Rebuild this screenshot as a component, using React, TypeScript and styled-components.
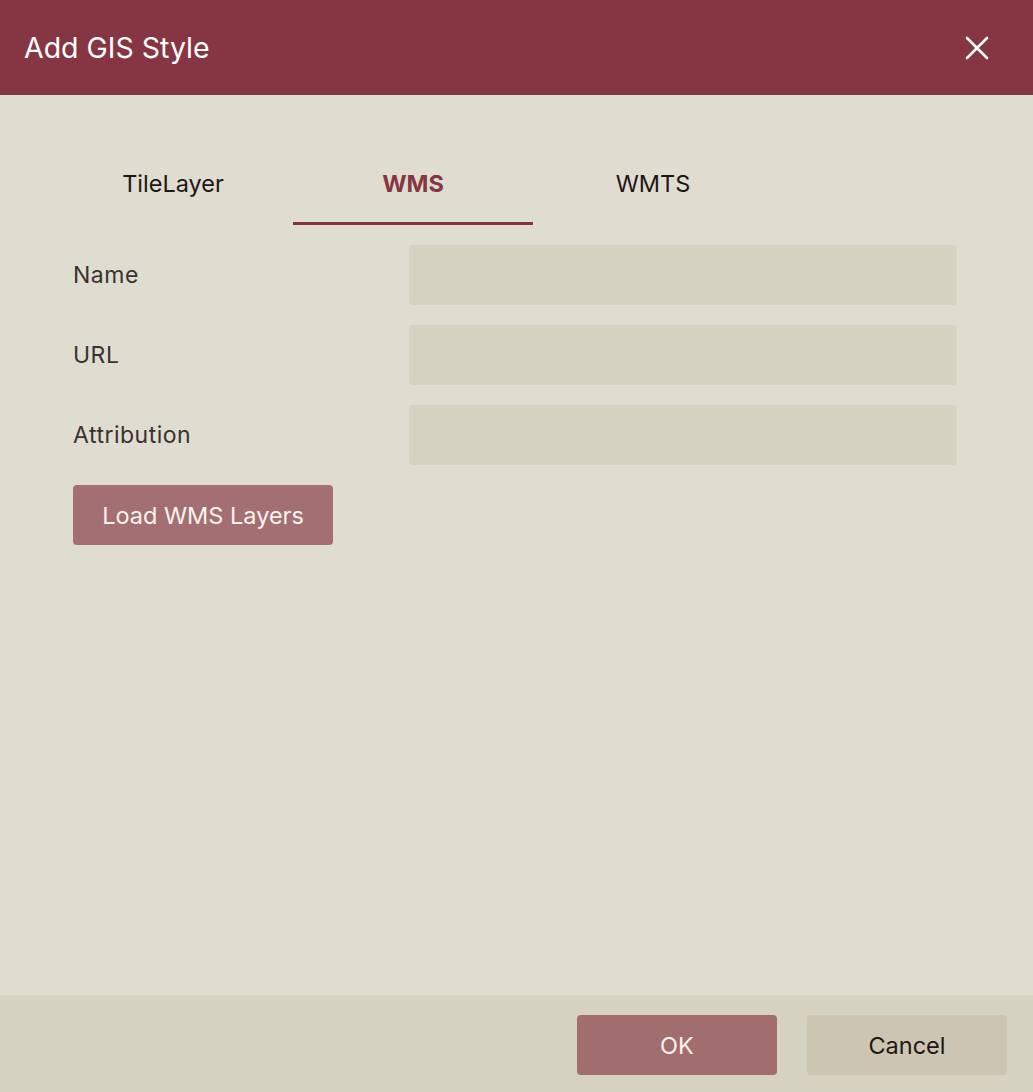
import styled, { createGlobalStyle } from "styled-components";

const GlobalStyle = createGlobalStyle`
	html, body {
		margin: 0;
		padding: 0;
		height: 100%;
	}
	body {
		font-family: Inter, "Liberation Sans", sans-serif;
		background: #dfddd0;
	}
	#root {
		height: 100%;
	}
`;

const tabs = ["TileLayer", "WMS", "WMTS"];
const fields = ["Name", "URL", "Attribution"];

export default function App() {
	return (
		<>
			<GlobalStyle />
			<Dialog>
				<Header>
					<Title>Add GIS Style</Title>
					<CloseBtn aria-label="Close">
						<svg width="24" height="24" viewBox="0 0 24 24">
							<path
								d="M2 2 L22 22 M22 2 L2 22"
								stroke="#fff"
								strokeWidth="2.6"
								strokeLinecap="round"
							/>
						</svg>
					</CloseBtn>
				</Header>
				<Body>
					<TabRow>
						{tabs.map((t) => (
							<Tab key={t} $active={t === "WMS"}>
								{t}
							</Tab>
						))}
					</TabRow>
					<Form>
						{fields.map((f) => (
							<FieldRow key={f}>
								<Label>{f}</Label>
								<Input />
							</FieldRow>
						))}
						<LoadBtn>Load WMS Layers</LoadBtn>
					</Form>
				</Body>
				<Footer>
					<FooterBtn $primary>OK</FooterBtn>
					<FooterBtn>Cancel</FooterBtn>
				</Footer>
			</Dialog>
		</>
	);
}

const Dialog = styled.div`
	display: flex;
	flex-direction: column;
	height: 100vh;
	background: #dfddd0;
`;

const Header = styled.div`
	display: flex;
	align-items: center;
	justify-content: space-between;
	height: 95px;
	padding: 0 44px 0 24px;
	box-sizing: border-box;
	background: #863643;
`;

const Title = styled.h1`
	margin: 0;
	font-size: 28.5px;
	font-weight: 400;
	color: #fff;
`;

const CloseBtn = styled.button`
	display: flex;
	align-items: center;
	justify-content: center;
	padding: 0;
	border: none;
	background: none;
	cursor: pointer;
`;

const Body = styled.div`
	flex: 1;
	padding: 50px 76px 0 73px;
`;

const TabRow = styled.div`
	display: flex;
	margin-left: -20px;
`;

const Tab = styled.div<{ $active?: boolean }>`
	display: flex;
	align-items: center;
	justify-content: center;
	width: 240px;
	height: 80px;
	box-sizing: border-box;
	font-size: 23.5px;
	font-weight: ${(p) => (p.$active ? 700 : 400)};
	color: ${(p) => (p.$active ? "#863643" : "#1f1515")};
	border-bottom: 3px solid ${(p) => (p.$active ? "#863643" : "transparent")};
	cursor: pointer;
`;

const Form = styled.div`
	display: flex;
	flex-direction: column;
	gap: 20px;
	margin-top: 20px;
`;

const FieldRow = styled.div`
	display: flex;
	align-items: center;
	justify-content: space-between;
`;

const Label = styled.label`
	font-size: 23px;
	letter-spacing: 0.5px;
	color: #3d3030;
`;

const Input = styled.input`
	width: 548px;
	height: 60px;
	box-sizing: border-box;
	border: none;
	border-radius: 4px;
	background: #d5d2c1;
	outline: none;
`;

const LoadBtn = styled.button`
	align-self: flex-start;
	width: 260px;
	height: 60px;
	border: none;
	border-radius: 4px;
	background: #a46f72;
	color: #fbf3f0;
	font-family: inherit;
	font-size: 23.5px;
	cursor: pointer;
`;

const Footer = styled.div`
	display: flex;
	justify-content: flex-end;
	gap: 30px;
	padding: 20px 26px 17px;
	background: #d5d2c1;
`;

const FooterBtn = styled.button<{ $primary?: boolean }>`
	width: 200px;
	height: 60px;
	border: none;
	border-radius: 4px;
	background: ${(p) => (p.$primary ? "#a16d6f" : "#cbc5b2")};
	color: ${(p) => (p.$primary ? "#fbf1ee" : "#1f1515")};
	font-family: inherit;
	font-size: 23.5px;
	cursor: pointer;
`;
